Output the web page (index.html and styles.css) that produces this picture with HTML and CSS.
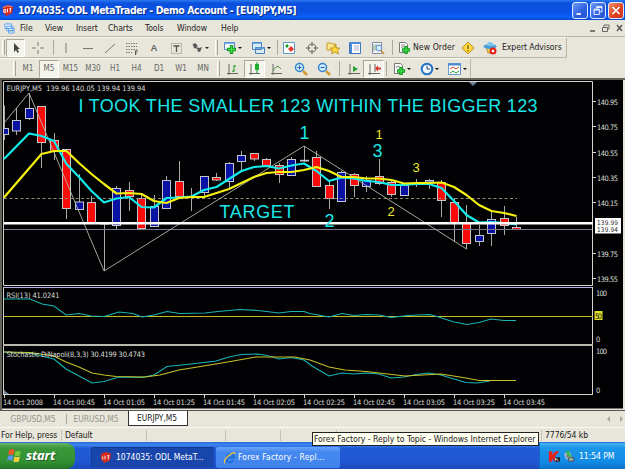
FILE: index.html
```html
<!DOCTYPE html>
<html lang="en">
<head>
<meta charset="utf-8">
<title>1074035: ODL MetaTrader</title>
<link rel="stylesheet" href="styles.css">
</head>
<body>
<header class="titlebar">
  <svg class="logo" viewBox="0 0 14 14"><path d="M2 3 8 1l5 2-1 7-6 3-4-4z" fill="#d42a20"/><path d="M2 4 7 2l5 1" stroke="#f89878" fill="none"/><path d="M3 6h2v3H3zM7 5v4M9 5h2M10 5v4" stroke="#fff" fill="none"/></svg>
  <h1>1074035: ODL MetaTrader - Demo Account - [EURJPY,M5]</h1>
  <div class="winbtns">
    <span class="wb"><svg viewBox="0 0 16 16"><path d="M4 12h5" stroke="#fff" stroke-width="2"/></svg></span>
    <span class="wb"><svg viewBox="0 0 16 16"><path d="M6.5 6V3.5h6v6H10M6.5 4.5h6M3.500 6.500h6v6h-6zM3.500 7.500h6" stroke="#fff" fill="none"/></svg></span>
    <span class="wb close"><svg viewBox="0 0 16 16"><path d="m4 4 8 8M12 4l-8 8" stroke="#fff" stroke-width="2"/></svg></span>
  </div>
</header>

<nav class="menubar">
  <svg class="mdi" viewBox="0 0 12 12"><path d="M1 1h7v5H1zM3 3.500h7v5H3zM5 6h6v5H5z" fill="#eaf4ff" stroke="#5a9be8"/><path d="m6 9 2-1 2 1" stroke="#48a" fill="none"/></svg>
  <span>File</span><span>View</span><span>Insert</span><span>Charts</span><span>Tools</span><span>Window</span><span>Help</span>
  <svg class="mdibtns" viewBox="0 0 38 12"><path d="M3 9h5" stroke="#555" stroke-width="1.500"/><path d="M17 5V3h5v4h-2M15.500 5.500h5v4h-5z" stroke="#666" fill="none"/><path d="m30 3 5 6M35 3l-5 6" stroke="#555" stroke-width="1.400"/></svg>
</nav>

<div class="toolbar main">
  <i class="grip"></i>
  <span class="on"><svg viewBox="0 0 14 14"><path d="M5 2v9l2-2 1.500 3 1.500-1-1.500-3H11z" fill="#444"/></svg></span>
  <span><svg viewBox="0 0 14 14"><path d="M7 1v4M7 9v4M1 7h4M9 7h4" stroke="#777"/></svg></span>
  <i class="sep"></i>
  <span><svg viewBox="0 0 14 14"><path d="M7 2v10" stroke="#777"/></svg></span>
  <span><svg viewBox="0 0 14 14"><path d="M2 7.500h10" stroke="#777"/></svg></span>
  <span><svg viewBox="0 0 14 14"><path d="M2 12 12 3" stroke="#777"/></svg></span>
  <span><svg viewBox="0 0 14 14"><path d="M1 2.500h11M1 5.500h11M1 8.500h11M1 11.500h6" stroke="#777" stroke-dasharray="1.500 1"/><path d="M10 10h3M10.500 10v4M10 12h2" stroke="#555" fill="none"/></svg></span>
  <span class="letter">A</span>
  <span><svg viewBox="0 0 14 14"><path d="M2.500 2.500h10v10h-10z" stroke="#888" stroke-dasharray="1 1" fill="none"/><path d="M4.500 5h6M7.500 5v6" stroke="#555" stroke-width="1.300"/></svg></span>
  <span><svg class="wide" viewBox="0 0 20 14"><path d="m2 4 3-2 3 3-2 1 3 1 3-1-2 5-3-1 1-2-4-1-1-3z" fill="#555"/><path d="M15 6h4l-2 2z" fill="#222"/></svg></span>
  <i class="grip"></i>
  <span><svg class="wide" viewBox="0 0 20 14"><path d="M1.500 1.500h10v7h-10z" fill="#f8fbff" stroke="#5a87c0"/><path d="M1 2h11" stroke="#5a9be0" stroke-width="1.500"/><path d="M8.500 4v9M4 8.500h9" stroke="#179a22" stroke-width="3.400"/><path d="M8.500 5v7M5 8.500h7" stroke="#3bdc48" stroke-width="1.400"/><path d="M15 6h4l-2 2z" fill="#111"/></svg></span>
  <span><svg class="wide" viewBox="0 0 20 14"><path d="M1.500 1.500h9v7h-9zM4.500 6.500h9v6h-9z" fill="#d6eafa" stroke="#4c80b8"/><path d="M1 2h10M4 7h10" stroke="#4c92d8" stroke-width="1.500"/><path d="M16 6h4l-2 2z" fill="#111"/></svg></span>
  <i class="sep"></i>
  <span><svg viewBox="0 0 14 14"><path d="M1.500 1.500h11v11h-11z" fill="#fff" stroke="#5e9bc8"/><path d="m3 5 2-2 2 2-2 2z" fill="#14a030"/><path d="m6 8 3-3 3 3-3 3z" fill="#e23a2c"/></svg></span>
  <span><svg viewBox="0 0 14 14"><circle cx="7" cy="7" r="4" fill="none" stroke="#777"/><path d="M7 1v4M7 9v4M1 7h4M9 7h4" stroke="#777" stroke-width="1.400"/></svg></span>
  <span><svg viewBox="0 0 14 14"><path d="M1 2h4l1 1h4v6H1z" fill="#ffe888" stroke="#c49730"/><path d="m9 4 1.300 3H14l-2.500 2.300 1 3.700L9 11l-3.500 2 1-3.700L4 7h3.700z" fill="#ffd83c" stroke="#b98a1c" stroke-width=".8"/></svg></span>
  <span><svg viewBox="0 0 14 14"><path d="M1.500 1.500h11v11h-11z" fill="#fff" stroke="#3d76bd"/><path d="M1 2h12M3 3v9" stroke="#4c8ad6" stroke-width="2"/><path d="M6 5h5M6 7h5M6 9h5" stroke="#aac"/></svg></span>
  <span><svg viewBox="0 0 14 14"><path d="M1.500 1.500h9v11h-9z" fill="#f4f4f4" stroke="#88a"/><path d="M3 4v6M5 3v6" stroke="#7a8"/><circle cx="8" cy="7" r="3" fill="#cfe8ff" stroke="#5a8fc6"/><path d="m10 9.500 3 3.500" stroke="#c89038" stroke-width="1.800"/></svg></span>
  <i class="sep"></i>
  <span><svg viewBox="0 0 14 14"><path d="M2.500 1.500h6l2 2v8h-8z" fill="#fff" stroke="#777"/><path d="M4 4h4M4 6h4" stroke="#888"/><path d="M9 5v8M5 9h8" stroke="#179a22" stroke-width="3.400"/><path d="M9 6v6M6 9h6" stroke="#3bdc48" stroke-width="1.400"/></svg></span>
  <span class="label order">New Order</span>
  <span><svg viewBox="0 0 14 14"><path d="m7 1 6 6-6 6-6-6z" fill="#ffd83c" stroke="#b8902a"/><path d="M7 4v4M7 9v1.500" stroke="#7a5c10" stroke-width="1.300"/></svg></span>
  <span><svg viewBox="0 0 14 14"><path d="M3 6h9l-2 6H5z" fill="#f3cd58" stroke="#b99838"/><ellipse cx="7" cy="5.500" rx="6.500" ry="2.500" fill="#4a9fd8"/><path d="M4 5q0-4 3-4t4 4z" fill="#78c2ee"/><circle cx="10" cy="10" r="3.500" fill="#e02218"/><path d="M8.800 8.800h2.400v2.400H8.800z" fill="#fff"/></svg></span>
  <span class="label expert">Expert Advisors</span>
</div>

<div class="toolbar periods">
  <i class="grip"></i>
  <span>M1</span><span class="on">M5</span><span>M15</span><span>M30</span><span>H1</span><span>H4</span><span>D1</span><span>W1</span><span>MN</span>
  <i class="grip"></i>
  <span><svg viewBox="0 0 14 14"><path d="M3 2v11M1 11.500h11" stroke="#666"/><path d="M8 3v7M8 4h2M6 9h2" stroke="#189828"/></svg></span>
  <span class="on"><svg viewBox="0 0 14 14"><path d="M3 2v11M1 11.500h11" stroke="#666"/><path d="M9 0v11" stroke="#178a24"/><path d="M7 2h4v6H7z" fill="#20b030"/></svg></span>
  <span><svg viewBox="0 0 14 14"><path d="M3 2v11M1 11.500h11" stroke="#666"/><path d="M3 9q4-8 8-2" stroke="#4a9a50" fill="none"/></svg></span>
  <span class="zoomer"><svg viewBox="0 0 14 14"><circle cx="5.500" cy="5.500" r="4" fill="#d8efff" stroke="#3180cc" stroke-width="1.500"/><path d="M3.500 5.500h4M5.500 3.500v4" stroke="#2468b0" stroke-width="1.200"/><path d="m9 9 4 4" stroke="#d09a30" stroke-width="2.500"/></svg></span>
  <span><svg viewBox="0 0 14 14"><circle cx="5.500" cy="5.500" r="4" fill="#d8efff" stroke="#3180cc" stroke-width="1.500"/><path d="M3.500 5.500h4" stroke="#2468b0" stroke-width="1.200"/><path d="m9 9 4 4" stroke="#d09a30" stroke-width="2.500"/></svg></span>
  <i class="sep"></i>
  <span><svg viewBox="0 0 14 14"><path d="M3 2v11M1 11.500h12" stroke="#666"/><path d="m6 4 5 3-5 3z" fill="#22a332"/></svg></span>
  <span class="on"><svg viewBox="0 0 14 14"><path d="M3 2v11M1 11.500h12M8 2v8" stroke="#666"/><path d="m8 6.500 3-3v2h3v2h-3v2z" fill="#d83428"/></svg></span>
  <i class="sep"></i>
  <span><svg class="wide" viewBox="0 0 20 14"><path d="M2.500 1.500h6l2 2v8h-8z" fill="#fff" stroke="#777"/><path d="M4 6q2-4 4 0" stroke="#777" fill="none"/><path d="M9 5v8M5 9h8" stroke="#179a22" stroke-width="3.400"/><path d="M9 6v6M6 9h6" stroke="#3bdc48" stroke-width="1.400"/><path d="M15 6h4l-2 2z" fill="#111"/></svg></span>
  <span><svg class="wide" viewBox="0 0 20 14"><circle cx="7" cy="7" r="5.300" fill="#eef8ff" stroke="#2473c8" stroke-width="2"/><path d="M7 3.500V7h3" stroke="#347" fill="none"/><path d="M15 6h4l-2 2z" fill="#111"/></svg></span>
  <span><svg class="wide" viewBox="0 0 20 14"><path d="M1.500 1.500h12v11h-12z" fill="#fff" stroke="#5f9bd0"/><path d="M1 2.500h13" stroke="#4a8bd0" stroke-width="2"/><path d="m3 7 3-2 3 2 3-2" stroke="#c43" fill="none"/><path d="m3 11 3-2 3 2 3-2" stroke="#393" fill="none"/><path d="M16 6h4l-2 2z" fill="#111"/></svg></span>
</div>

<main class="chart">
<svg class="plot" viewBox="0 78 625 332">
  <path class="bevel" d="M0 79h625M1 79v331"/>
  <path d="M2 80h621v328.500H2z" fill="#020204"/>
  <g class="candles" id="candles"></g>
  <path class="frame" d="M4 81.500h588.500V285.500H3.500V81.500M3.500 287.500h589M592.500 287V344.500M3.500 287V344.500M592.500 346V394.500M3.500 346V394.500M3 394.500h590"/>
  <path d="M3 345h590" stroke="#b9b9b0" stroke-width="2"/>
  <path d="M4 287.500h588" stroke="#aeb0e8"/>
  <path d="M469 82h8l-4 4z" fill="#70809c"/><path d="M4 390v4h5z" fill="#70809c"/>
  <path class="ticks" d="M593 101.500h3M593 126.500h3M593 152.500h3M593 177.500h3M593 202.500h3M593 253.500h3M593 278.500h3M4.500 395v3M54.500 395v3M104.500 395v3M154.500 395v3M204.500 395v3M254.500 395v3M304.500 395v3M354.500 395v3M404.500 395v3M454.500 395v3M504.500 395v3"/>
  <path d="M4 198.500h513" stroke="#8f8c72" stroke-dasharray="3 2.500"/>
  <path d="M4 229.500h588" stroke="#757a92"/>
  <polyline class="zigzag" points="4,123 29,93 104,271 304,146 466.500,249"/>
  <polyline class="ma fast" points="4,159 29,133.500 41.500,136 54,141 66.500,164 79,177 91.500,191 104,202.500 116.500,198.500 129,197 141.500,207 154,207.500 166.500,198 179,197.500 191.500,196.500 204,190 216.500,187 229,179 241.500,171 254,167 266.500,166 279,168.500 291.500,165.500 304,163.500 316.500,171 329,181 341.500,177.500 354,178.500 366.500,181 379,182 391.500,185 404,185 416.500,184 429,184 441.500,188 454,201 466.500,215 479,222.500 491.500,222 504,223 516.500,224.500"/>
  <polyline class="ma slow" points="4,197.500 41.500,154 54,151 66.500,151 79,163 91.500,174 104,184 116.500,193.500 129,193 141.500,194 154,201 166.500,203 179,198 191.500,197 204,197 216.500,193 229,189 241.500,183 254,177 266.500,173 279,172 291.500,172 304,170 316.500,167 329,171 341.500,177 354,177 366.500,178.500 379,178.500 391.500,180 404,183.500 416.500,183 429,183 441.500,182.500 454,187 466.500,195 479,205 491.500,211 504,213 516.500,216"/>
  <path d="M4 223.300h589" stroke="#fff" stroke-width="2.400"/>
  <path d="M4 316.500h589" stroke="#c6b91f" stroke-width="1.200"/>
  <polyline class="thin fast" points="4,299 30,299 42,304 54,306 66,315 79,313.500 91,316 104,316.500 119,312 133,313.500 142,317 154,315 167,311.500 180,313.500 205,313 218,311.500 240,309.500 258,310.500 279,313 291,311.500 304,311.500 310,313.500 329,317 342,313.500 354,315.500 366,314.500 379,315 391,317.500 408,315.500 429,314.500 437,316.500 454,322 467,324.500 479,322.500 491,319 504,320.500 516,320.500"/>
  <polyline class="thin fast" points="4,352 29,353 54,359 66,369 79,376 92,383 104,381.500 119,377 142,377.500 154,375 167,366.500 191,364 216,361 229,357 241,354.500 258,354 267,355.500 279,359 291,357.500 304,360 312,366 329,376 342,373 354,374 366,373 379,374 391,378 404,377 416,374.500 429,373 441,375 454,379 466,382.500 477,383 490,381"/>
  <polyline class="thin slow" points="4,352 30,352.500 54,356 66,362 79,367 92,373 104,375 116,376.500 145,377 160,375 179,370 216,364 256,357 295,357 310,360 329,367 345,370 366,371.500 405,376 441,374 466,378 479,380.500 516,380.500"/>
  <g class="cy">
    <text x="78.500" y="112.400" font-size="18" textLength="459">I TOOK THE SMALLER 123 WITHIN THE BIGGER 123</text>
    <text x="219.500" y="218" font-size="18" textLength="75">TARGET</text>
    <text x="299.500" y="139" font-size="18">1</text><text x="372.500" y="157" font-size="18">3</text><text x="324.500" y="226.500" font-size="18">2</text>
  </g>
  <g class="ye" font-size="13"><text x="375.500" y="139">1</text><text x="412.500" y="172">3</text><text x="387.500" y="215.500">2</text></g>
  <g class="small">
    <text x="6.500" y="91" textLength="139">EURJPY,M5&#160; 139.96 140.05 139.94 139.94</text>
    <text x="6.500" y="298" textLength="53">RSI(13) 41.0241</text>
    <text x="6.500" y="356.500" textLength="138.500">Stochastic DiNapoli(8,3,3) 30.4199 30.4743</text>
    <text x="597" y="104.500" textLength="21">140.95</text><text x="597" y="129.500" textLength="21">140.75</text><text x="597" y="155.500" textLength="21">140.55</text><text x="597" y="180.500" textLength="21">140.35</text><text x="597" y="205.500" textLength="21">140.15</text><text x="597" y="256.500" textLength="21">139.75</text><text x="597" y="281.500" textLength="21">139.55</text>
    <text x="596" y="295.500" textLength="11">100</text><text x="596" y="341.500">0</text><text x="596" y="354" textLength="11">100</text><text x="596" y="392.500">0</text>
    <path d="M595 218h26v15.500h-26z" fill="#fff"/>
    <text class="dark price" x="597" y="224.800" textLength="21">139.99</text><text class="dark price" x="597" y="232.300" textLength="21">139.94</text>
    <path d="M594.500 311h8v9h-8z" fill="#e3df28"/><text class="dark" x="595" y="318.500" textLength="7">50</text>
    <text x="3" y="405" textLength="40">14 Oct 2008</text><text x="53" y="405" textLength="42">14 Oct 00:45</text><text x="103" y="405" textLength="42">14 Oct 01:05</text><text x="153" y="405" textLength="42">14 Oct 01:25</text><text x="203" y="405" textLength="42">14 Oct 01:45</text><text x="253" y="405" textLength="42">14 Oct 02:05</text><text x="303" y="405" textLength="42">14 Oct 02:25</text><text x="353" y="405" textLength="42">14 Oct 02:45</text><text x="403" y="405" textLength="42">14 Oct 03:05</text><text x="453" y="405" textLength="42">14 Oct 03:25</text><text x="503" y="405" textLength="42">14 Oct 03:45</text>
  </g>
</svg>
</main>

<div class="tabs"><span>GBPUSD,M5</span><span>EURUSD,M5</span><span class="active">EURJPY,M5</span><svg viewBox="0 0 20 8"><path d="M5 1v6L2 4zM15 1v6l3-3z" fill="#aaa89c"/></svg></div>

<div class="status"><span>For Help, press</span><span>Default</span><span></span><span></span><span></span><span></span><span class="traffic">7776/54 kb</span></div>

<footer class="taskbar">
  <div class="start"><svg viewBox="0 0 14 14"><path d="M2 2q3-2 5 0L6 6.500Q3 5 1 6.500z" fill="#ee5a2c"/><path d="M8 2.500q3 1 5 0L12 7q-3 1-5 0z" fill="#7cc83c"/><path d="M1 7.500q3-1.500 5 0L5 12q-3-1.500-5 0z" fill="#5a96f0"/><path d="M7 8q3 1 5 0l-1 4.500q-3 1-5 0z" fill="#f8d040"/></svg><b>start</b></div>
  <div class="task pressed"><svg viewBox="0 0 14 14"><path d="M2 3 8 1l5 2-1 7-6 3-4-4z" fill="#d42a20"/><path d="M4 6v3M6.500 5v4M9 5h2M10 5v4" stroke="#fff" fill="none"/></svg><span>1074035: ODL MetaT...</span></div>
  <div class="task ie"><svg viewBox="0 0 14 14"><path d="M11 10q-2 3-5 2T4 7t4-4 4 4H5" fill="none" stroke="#1e6fd8" stroke-width="2.200"/><path d="M2 13q-2-3 4-8t7-2" fill="none" stroke="#f2c53a" stroke-width="1.400"/></svg><span>Forex Factory - Repl...</span></div>
  <div class="tray"><svg viewBox="0 0 14 14"><path d="M1 1h4v4l4-4h4L8 7l4 6H8L5 9v4H1z" fill="#e8201c"/><path d="M8 8h6v5H8z" fill="#222"/><path d="M9 12V9l3 3" stroke="#fff" fill="none"/></svg><svg viewBox="0 0 14 14"><path d="m2 4 6-1 2 5-6 2z" fill="#7b8a90" stroke="#dde"/><path d="m6 9 6-1 1 4-6 1z" fill="#9aa" stroke="#445"/><path d="M3 1h5v3l3 3-3 1-3-3z" fill="#38b848"/></svg><span>11:54 PM</span></div>
</footer>
<div class="tooltip">Forex Factory - Reply to Topic - Windows Internet Explorer</div>
<script src="chart.js"></script>
</body>
</html>
```
FILE: styles.css
```css
* { box-sizing: border-box; }
body { margin: 0; width: 625px; height: 469px; overflow: hidden; position: relative; background: #e8e6da; color: #222; font: 8.6px/1 "DejaVu Sans Condensed", "DejaVu Sans", sans-serif; white-space: nowrap; display: flex; flex-direction: column; }
svg { display: block; flex: none; }

.titlebar { height: 20px; flex: none; display: flex; align-items: center; background: linear-gradient(#2b7bf0 0, #0c50dc 3px, #0a52e4 12px, #0a60fa 17px, #0846c8); padding-left: 1px; }
.logo { width: 13px; height: 13px; margin-right: 4px; }
.titlebar h1 { margin: 0; width: 281px; font: bold 10.4px/20px "DejaVu Sans Condensed", sans-serif; letter-spacing: -.4px; color: #fff; text-shadow: 1px 1px #0a2a80; }
.winbtns { display: flex; gap: 2px; margin-left: auto; padding-right: 1px; }
.wb { width: 16px; height: 17px; border: 1px solid #dfe9ff; border-radius: 3px; background: linear-gradient(135deg, #6f9cf5, #2c5fe0 60%, #2456d0); }
.wb svg { width: 14px; height: 15px; }
.wb.close { background: linear-gradient(135deg, #f09070, #dd4020 60%, #c83818); }

.menubar { height: 17px; flex: none; display: grid; grid-template-columns: 16px 25px 31px 32px 37px 32px 44px 26px 1fr; align-items: center; padding-left: 4px; border-bottom: 1px solid #b9b7a8; line-height: 15px; }
.menubar span { letter-spacing: -.08px; }
.mdi { width: 11px; height: 11px; }
.mdibtns { width: 38px; height: 12px; justify-self: end; }

.toolbar { display: grid; flex: none; align-items: center; justify-items: center; border-top: 1px solid #faf9f2; border-right: 1px solid #b9b7a8; }
.toolbar svg { width: 14px; height: 14px; }
.toolbar svg.wide { width: 20px; }
.toolbar > .on { width: 100%; height: 18px; display: flex; align-items: center; justify-content: center; background: #f4f3ec; border: 1px solid; border-color: #aaa89a #fff #fff #aaa89a; }
.main { width: 567px; height: 21px; border-bottom: 1px solid #b9b7a8; grid-template-columns: 6px 19px 26px 4px 22px 22px 22px 22px 22px 21px 28px 5px 27px 29px 4px 20px 25px 18px 26px 20px 8px 16px 45px 22px 22px 64px; }
.periods { width: 471px; height: 20px; padding-left: 11px; color: #666; font-size: 8px; grid-template-columns: 6px 22px 20px 23px 22px 22px 21px 24px 20px 24px 7px 22px 21px 23px 26px 19px 12px 18px 21px 4px 28px 28px 25px; }
.grip { width: 3px; height: 15px; border-left: 1px solid #fff; border-right: 1px solid #a5a396; }
.sep { width: 1px; height: 15px; background: #aaa89b; }
.letter { font: bold 9.500px "Liberation Sans", sans-serif; color: #666; }
.label { justify-self: start; padding-left: 1px; }
.order { letter-spacing: .08px; }
.expert { letter-spacing: -.06px; }

.chart { height: 332px; flex: none; }
.plot { width: 625px; height: 332px; }
.bevel { fill: none; stroke: #64645a; stroke-width: 2; }
.frame, .ticks { fill: none; stroke: #d4d4cc; }
.candles .wick { stroke: #a9a9a4; }
.candles rect { stroke: #c5c6cc; }
.candles .up { fill: #0a12a4; }
.candles .down { fill: #fb0a0a; }
.zigzag { fill: none; stroke: #b6b5a6; stroke-width: .9; }
.ma { fill: none; stroke-width: 2.2; stroke-linejoin: round; }
.thin { fill: none; stroke-width: 1.1; }
.fast { stroke: #12ecec; }
.slow { stroke: #f6f210; }
.thin.fast { stroke: #19b4b4; }
.thin.slow { stroke: #c7c029; }
.cy { fill: #19e6e8; font-family: "Liberation Sans", sans-serif; }
.ye { fill: #f1e92c; font-family: "Liberation Sans", sans-serif; }
.small { fill: #dcdcd6; font: 7.400px "DejaVu Sans Condensed", sans-serif; }
.small .dark { fill: #222; }
.small .price { font-size: 6.400px; }

.tabs { height: 17px; flex: none; display: flex; border-top: 1px solid #555; color: #97958b; font-size: 8.400px; line-height: 16px; }
.tabs span { width: 63px; height: 10px; margin-top: 3px; line-height: 10px; text-align: center; border-right: 1px solid #aaa89c; letter-spacing: -.04px; }
.tabs span:first-child { width: 67px; }
.tabs span:nth-child(2) { width: 61px; border: 0; padding-right: 3px; }
.tabs .active { width: 60px; height: 15px; margin: 0; padding-right: 2px; background: #fff; color: #222; border: 1px solid #333; border-top: 0; line-height: 14px; }
.tabs svg { width: 20px; height: 8px; margin: 4px 0 0 auto; padding-right: 0; }

.status { height: 15px; flex: none; display: grid; grid-template-columns: 62px 85px 79px 55px 56px 205px 1fr; align-items: center; border-top: 1px solid #faf9f1; }
.status span { height: 11px; line-height: 11px; padding-left: 3px; border-right: 1px solid #c4c2b4; letter-spacing: -.1px; }
.status span:first-child { padding-left: 1px; }
.status .traffic { border: 0; }

.taskbar { height: 27px; flex: none; display: flex; align-items: flex-end; color: #fff; background: linear-gradient(#2a6ad8, #3d87f0 3px, #225bd6 6px, #1f56d4 20px, #1a49b8); }
.start { width: 75px; height: 26px; display: flex; align-items: center; padding: 0 0 1px 7px; gap: 4px; background: linear-gradient(#68b468, #3a983a 5px, #329032 19px, #247424); border-radius: 0 9px 9px 0; margin-right: 16px; }
.start svg { width: 15px; height: 15px; }
.start b { font: italic bold 13px/1 "Noto Sans", sans-serif; letter-spacing: -.2px; text-shadow: 1px 1px #245a24; }
.task { height: 21px; display: flex; align-items: center; gap: 4px; border-radius: 2px; margin-bottom: 1px; font-size: 8.500px; letter-spacing: 0; }
.task svg { width: 13px; height: 13px; }
.pressed { width: 123px; padding-left: 8px; background: #1846ac; box-shadow: inset 1px 1px #123a90; }
.ie { width: 124px; margin-left: 2px; padding-left: 7px; gap: 2px; background: linear-gradient(#69a4f8, #4488f0 5px, #3f82ec); letter-spacing: .18px; }
.tray { width: 86px; height: 26px; margin-left: auto; display: flex; align-items: center; padding-left: 8px; gap: 3px; border-left: 1px solid #0f6ac8; background: linear-gradient(#44b4f4, #1a96ea 5px, #118ae4 19px, #0e72c8); }
.tray svg { width: 12px; height: 13px; }
.tray span { margin-left: 1px; letter-spacing: -.08px; }
.tooltip { position: absolute; left: 312px; top: 432px; width: 227px; height: 14px; padding-left: 1px; line-height: 12px; background: #fffff0; border: 1px solid #222; letter-spacing: -.02px; }
```
FILE: chart.js
```js
// One entry per bar: wick top, wick bottom, body top, body bottom, direction.
const bars = [
  [105.5,140,128.5,134.5,1],[108,135,120.5,131,1],[93,120,108.5,118.5,1],[106,168,106.5,142.5,0],
  [133,160,140.5,151.5,0],[149,219,149.5,208.5,0],[174,209,202,209.5,1],[196,222,202.5,222.5,0],
  [223,271,223.5,224,1],[186,229,188.5,225.5,1],[182,211,190.5,196.5,0],[193,229,198.5,228.5,0],
  [195,227,206.5,226.5,1],[176,208,180.5,208.5,1],[161,197,181.5,196.5,0],[188,211,196.5,196.5,1],
  [176,199,176.5,192.5,1],[173,181,177.5,180,0],[162,188,163.5,181.5,1],[151,170,155.5,161.5,1],
  [153,161,153.5,159,0],[158,166,159.5,165.5,0],[163,183,165.5,174.5,0],[157,176,159.5,175.5,1],
  [146,162,160.3,161,1],[151,187,157.5,186.5,0],[181,209,185.5,198.5,0],[171,202,172.5,201.5,1],
  [173,197,174.5,185.5,0],[176,192,180.5,186.5,1],[159,185,176.5,183.5,0],[180,197,182.5,194.5,0],
  [184,196,185.5,195.5,1],[179,187,183.5,183.5,1],[179,189,180.5,182,1],[180,217,182.5,200.5,0],
  [198,242,202.5,223.5,0],[205,249,223.5,243.5,0],[225,246,235.5,241.5,1],[212,246,219.5,233.5,1],
  [206,235,218.5,225.5,0],[217,230,227.5,229.5,0]
];
document.getElementById("candles").innerHTML = bars.map(([hi, lo, top, bottom, up], i) => {
  const x = Math.floor(4 + i * 12.5) + 0.5;
  const left = Math.max(3.5, x - 4);
  return `<path class="wick" d="M${x} ${hi}V${lo}"/><rect class="${up ? "up" : "down"}" x="${left}" y="${top}" width="${x + 4 - left}" height="${Math.max(0.1, bottom - top)}"/>`;
}).join("");
```
